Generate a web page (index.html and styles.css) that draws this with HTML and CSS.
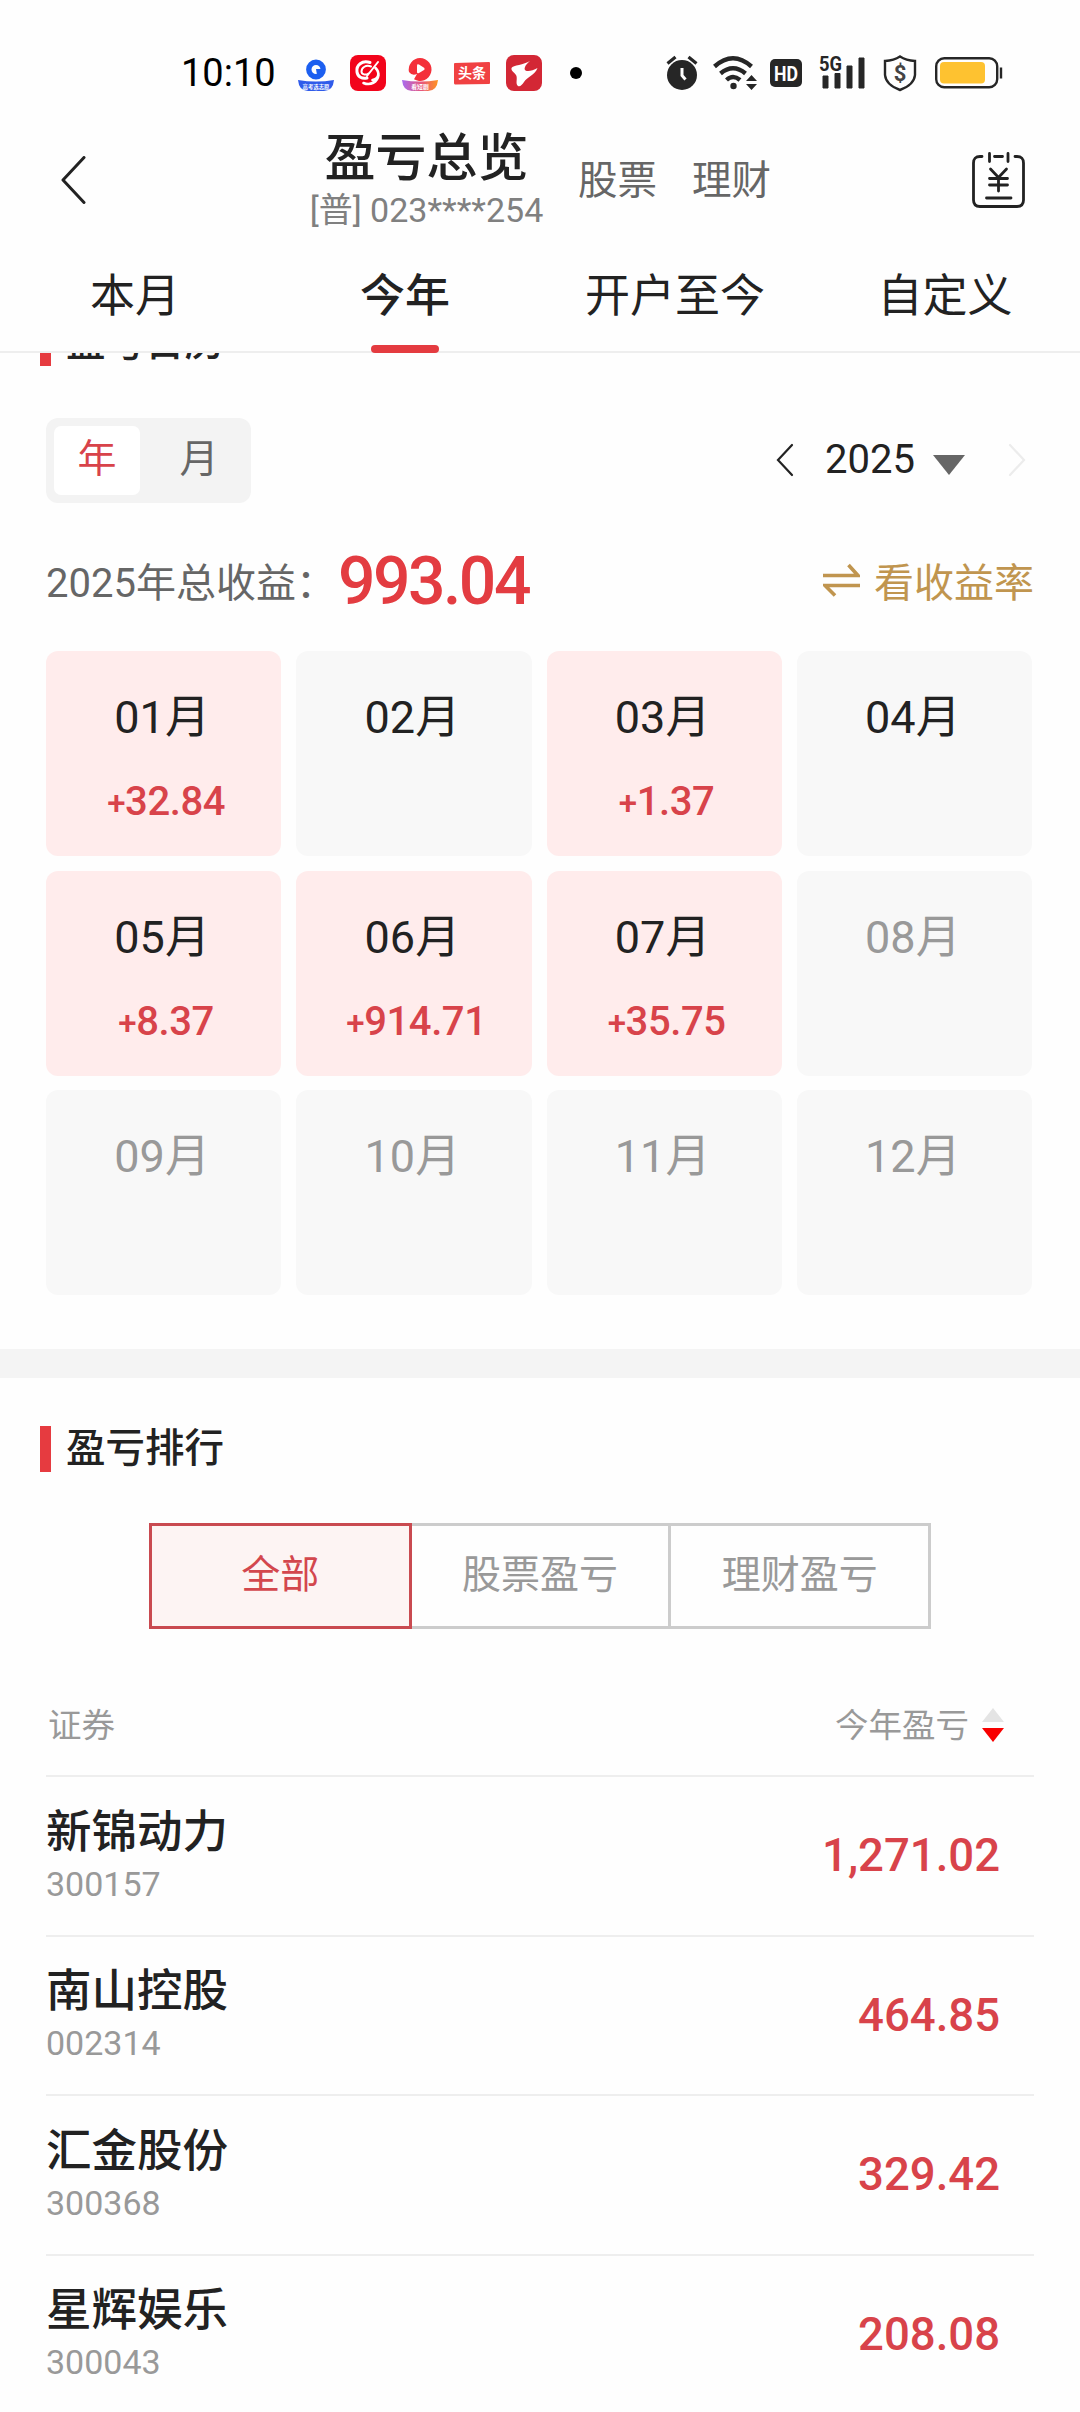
FILE: index.html
```html
<!DOCTYPE html>
<html lang="zh-CN">
<head>
<meta charset="UTF-8">
<meta name="viewport" content="width=device-width, initial-scale=1.0">
<title>盈亏总览</title>
<link rel="stylesheet" href="styles.css">
</head>
<body>
    <div class="status-bar">
        <span class="time">10:10</span>
        <div class="apps">
            <svg width="36" height="36" viewBox="0 0 36 36">
                <circle cx="18" cy="14.5" r="7.2" fill="none" stroke="#1c5ff0" stroke-width="5.4"/>
                <path d="M18 14h6v6h-5z" fill="#1c5ff0"/>
                <path d="M0 25Q18 28 36 25Q35 36 26 36H10Q1 36 0 25Z" fill="#2f5bea"/>
                <text x="18" y="33.8" font-size="5.4" font-weight="bold" text-anchor="middle" fill="#fff">高考选志愿</text>
            </svg>
            <svg width="36" height="36" viewBox="0 0 36 36">
                <rect width="36" height="36" rx="8" fill="#f2041b"/>
                <g fill="none" stroke="#fff" stroke-linecap="round">
                    <path d="M20 7.5C12 5 6 10 7 17c.7 5 5 7 10 6" stroke-width="3"/>
                    <path d="M21 11.5c-5-2-9.500 1-9.500 5c0 3 4 4 7 2" stroke-width="2"/>
                    <path d="M28 7L17 21" stroke-width="2"/>
                    <path d="M25.500 13c5 5 3 11-3 12M28.500 20c-1 7-8 11-15 8" stroke-width="2.600"/>
                </g>
            </svg>
            <svg width="36" height="36" viewBox="0 0 36 36">
                <defs>
                    <linearGradient id="ribbon"><stop offset="0" stop-color="#a86bf0"/><stop offset=".55" stop-color="#e8577b"/><stop offset="1" stop-color="#ff9420"/></linearGradient>
                </defs>
                <path d="M18 3a11.500 11.500 0 1 1-6 21.300l3-5.300a6.500 6.500 0 0 1-8-2A11.500 11.500 0 0 1 18 3Z" fill="#f4303a"/>
                <path d="M15 10.500q0-2 2-1l5 3.200q1.500 1.200 0 2.300l-5 3q-2 1-2-1z" fill="#fff"/>
                <path d="M0 25Q18 28 36 25Q35 36 26 36H10Q1 36 0 25Z" fill="url(#ribbon)"/>
                <text x="18" y="33.800" font-size="5.800" font-weight="bold" text-anchor="middle" fill="#fff">看短剧</text>
            </svg>
            <svg width="36" height="36" viewBox="0 0 36 36">
                <path d="M1 8L35 7Q36 7 36 8V28Q36 29 35 29L1 29.500Q0 29 0 28V9Q0 8 1 8Z" fill="#f04142"/>
                <text x="18" y="23.200" font-size="14" font-weight="bold" text-anchor="middle" fill="#fff">头条</text>
            </svg>
            <svg width="36" height="36" viewBox="0 0 36 36">
                <rect width="36" height="36" rx="8" fill="#d32735"/>
                <path d="M24 6C19 10 17.500 14 19.500 15.500C22 17 27 15.500 31.500 13C29 20 21 22 18 27C16 30 14 32 12 31C9 29 12 23 10 20C8 17 5 16 5.500 13C7 10 18 10 24 6Z" fill="#fff"/>
            </svg>
        </div>
        <span class="dot"></span>
        <div class="system">
            <svg class="alarm" width="32" height="36" viewBox="0 0 32 36">
                <circle cx="16" cy="20" r="15" fill="#262626"/>
                <path d="M1.500 8.500L9.500 2M22.500 2l8 6.500" stroke="#262626" stroke-width="3.200"/>
                <path d="M16 13v7.500l3.500 4" fill="none" stroke="#fff" stroke-width="3"/>
            </svg>
            <svg class="wifi" width="44" height="36" viewBox="0 0 44 36">
                <g fill="none" stroke="#262626" stroke-width="4.400">
                    <path d="M1.500 11.500Q20 -5 38.500 11.500"/>
                    <path d="M7.500 18.500Q20 8 32.500 18.500"/>
                    <path d="M13.500 25Q20 19 27 25"/>
                </g>
                <circle cx="20.500" cy="31" r="3.200" fill="#262626"/>
                <path d="M33 26l5.500-6 5.500 6zM33 29h11l-5.500 6z" fill="#262626"/>
            </svg>
            <svg class="hd" width="32" height="28" viewBox="0 0 32 28">
                <rect width="32" height="28" rx="5" fill="#262626"/>
                <text x="16" y="21.500" font-size="20.500" font-weight="bold" text-anchor="middle" textLength="24" lengthAdjust="spacingAndGlyphs" fill="#fff">HD</text>
            </svg>
            <svg class="signal" width="47" height="36" viewBox="0 0 47 36">
                <text x="0" y="16" font-size="20" font-weight="bold" textLength="23" lengthAdjust="spacingAndGlyphs" fill="#262626">5G</text>
                <path d="M4 21h5v12H4zM16 18.500h5v14.500h-5zM28 11h5v22h-5zM40 3h5v30h-5z" fill="#262626" stroke="#262626" stroke-linejoin="round"/>
            </svg>
            <svg class="shield" width="34" height="37" viewBox="0 0 34 37">
                <path d="M17 1.500Q23 5.500 32 6V20Q31 30 17 35Q3 30 2 20V6Q11 5.500 17 1.500Z" fill="none" stroke="#262626" stroke-width="2.400"/>
                <text x="17" y="26" font-size="22" font-weight="bold" text-anchor="middle" fill="#444">$</text>
            </svg>
            <svg class="battery" width="68" height="32" viewBox="0 0 68 32">
                <rect x="1.200" y="1.200" width="61" height="29" rx="8" fill="none" stroke="#262626" stroke-width="2.400"/>
                <rect x="5" y="5" width="45" height="21.500" rx="4" fill="#fec230"/>
                <path d="M66 10.500v11" stroke="#262626" stroke-width="2.400"/>
            </svg>
        </div>
    </div>

    <div class="header">
        <svg class="back" width="25" height="48" viewBox="0 0 25 48">
            <path d="M23 1.500L2 24l21 22.500" fill="none" stroke="#222" stroke-width="3" stroke-linecap="round" stroke-linejoin="round"/>
        </svg>
        <div class="title">
            <h1>盈亏总览</h1>
            <p>[普] 023****254</p>
        </div>
        <a class="link">股票</a>
        <a class="link">理财</a>
        <svg class="bill" width="53" height="56" viewBox="0 0 53 56">
            <g fill="none" stroke="#222" stroke-width="2.800" stroke-linecap="round">
                <path d="M10 4.500H8q-6.500 0-6.500 6.500V48q0 6.500 6.500 6.500H45q6.500 0 6.500-6.500V11q0-6.500-6.500-6.500H43"/>
                <path d="M22.500 4.500h8M17.500 1.500v8M36 1.500v8M18.500 17l8 8.500 8-8.500M26.500 25.500V39M17.500 26.500h18M17.500 33h18M14.500 46h24.500"/>
            </g>
        </svg>
    </div>

    <div class="tabs">
        <div class="tab">本月</div>
        <div class="tab active">今年</div>
        <div class="tab">开户至今</div>
        <div class="tab">自定义</div>
    </div>

    <div class="content">
        <div class="calendar">
            <h3 class="section-title">盈亏日历</h3>
            <div class="toolbar">
                <div class="switch">
                    <span class="on">年</span>
                    <span>月</span>
                </div>
                <div class="year-nav">
                    <svg width="18" height="34" viewBox="0 0 18 34"><path d="M16 2L2 17l14 15" fill="none" stroke="#222" stroke-width="2.200" stroke-linecap="round"/></svg>
                    <span class="year">2025</span>
                    <span class="caret"></span>
                    <svg width="18" height="34" viewBox="0 0 18 34"><path d="M2 2l14 15L2 32" fill="none" stroke="#ececec" stroke-width="2.200" stroke-linecap="round"/></svg>
                </div>
            </div>

            <div class="summary">
                <span class="label">2025年总收益：</span>
                <span class="total">993.04</span>
                <span class="rate">
                    <svg width="37" height="34" viewBox="0 0 37 34"><path d="M0 12.500H35L25.500 2M37 22.500H2L12 32.500" fill="none" stroke="#c0954f" stroke-width="3.600"/></svg>
                    看收益率
                </span>
            </div>

            <div class="months">
                <div class="month up"><b>01月</b><span><i>+</i>32.84</span></div>
                <div class="month"><b>02月</b></div>
                <div class="month up"><b>03月</b><span><i>+</i>1.37</span></div>
                <div class="month"><b>04月</b></div>
                <div class="month up"><b>05月</b><span><i>+</i>8.37</span></div>
                <div class="month up"><b>06月</b><span><i>+</i>914.71</span></div>
                <div class="month up"><b>07月</b><span><i>+</i>35.75</span></div>
                <div class="month future"><b>08月</b></div>
                <div class="month future"><b>09月</b></div>
                <div class="month future"><b>10月</b></div>
                <div class="month future"><b>11月</b></div>
                <div class="month future"><b>12月</b></div>
            </div>
        </div>

        <div class="ranking">
            <h3 class="section-title">盈亏排行</h3>
            <div class="filter">
                <div class="filter-item current">全部</div>
                <div class="filter-item">股票盈亏</div>
                <div class="filter-item">理财盈亏</div>
            </div>
            <div class="list">
                <div class="list-head">
                    <span>证券</span>
                    <span class="sort">今年盈亏
                        <svg width="22" height="34" viewBox="0 0 22 34"><path d="M0 14L11 0l11 14z" fill="#e4e4e4"/><path d="M0 20h22L11 34z" fill="#f80000"/></svg>
                    </span>
                </div>
                <div class="row">
                    <div><div class="name">新锦动力</div><div class="code">300157</div></div>
                    <div class="value">1,271.02</div>
                </div>
                <div class="row">
                    <div><div class="name">南山控股</div><div class="code">002314</div></div>
                    <div class="value">464.85</div>
                </div>
                <div class="row">
                    <div><div class="name">汇金股份</div><div class="code">300368</div></div>
                    <div class="value">329.42</div>
                </div>
                <div class="row">
                    <div><div class="name">星辉娱乐</div><div class="code">300043</div></div>
                    <div class="value">208.08</div>
                </div>
            </div>
        </div>
    </div>
</body>
</html>
```

FILE: styles.css
```css
* {
    box-sizing: border-box;
}

html {
    overflow: hidden;
}

body {
    margin: 0;
    width: 1080px;
    height: 2412px;
    overflow: hidden;
    display: flex;
    flex-direction: column;
    background-color: #fefefe;
    color: #222;
    font-family: Roboto, "Noto Sans CJK SC", sans-serif;
}

h1, h3, p {
    margin: 0;
    font-weight: 500;
}

svg {
    display: block;
    flex: none;
}

/* status bar */
.status-bar {
    height: 110px;
    flex: none;
    padding: 36px 77px 0 181px;
    display: flex;
    align-items: center;
}

.time {
    width: 117px;
    font-size: 38px;
    color: #000;
}

.apps {
    display: flex;
    gap: 16px;
}

.dot {
    width: 12px;
    height: 12px;
    margin-left: 28px;
    border-radius: 50%;
    background-color: #000;
}

.system {
    display: flex;
    align-items: center;
    margin-left: auto;
}

.wifi {
    margin-left: 15px;
}

.hd {
    margin-left: 13px;
}

.signal {
    margin-left: 17px;
}

.shield {
    margin-left: 17px;
}

.battery {
    margin-left: 18px;
}

/* header */
.header {
    height: 140px;
    flex: none;
    padding: 0 55px 0 61px;
    display: flex;
    align-items: center;
}

.title {
    width: 235px;
    margin-left: 223px;
    text-align: center;
}

.title h1 {
    font-size: 51px;
    line-height: 60px;
    white-space: nowrap;
}

.title p {
    font-size: 34px;
    line-height: 42px;
    font-weight: 400;
    color: #808080;
    white-space: nowrap;
}

.link {
    margin-left: 34px;
    padding-bottom: 7px;
    font-size: 39.500px;
    color: #666;
}

.link + .link {
    margin-left: 35px;
}

.bill {
    margin-left: auto;
}

.tabs {
    height: 103px;
    flex: none;
    display: flex;
    border-bottom: 2px solid #eee;
}

.tab {
    flex: 1;
    position: relative;
    padding-top: 14px;
    font-size: 45px;
    line-height: 66px;
    text-align: center;
}

.tab.active {
    font-weight: 500;
}

.tab.active::after {
    content: "";
    position: absolute;
    left: 101px;
    bottom: -2px;
    width: 68px;
    height: 8px;
    border-radius: 4px;
    background-color: #e43b40;
}

.content {
    flex: 1;
    overflow: hidden;
}

.section-title {
    display: flex;
    align-items: center;
    gap: 15px;
    margin-left: -6px;
    height: 46px;
    font-size: 39.500px;
    line-height: 46px;
}

.section-title::before {
    content: "";
    width: 11px;
    height: 46px;
    background-color: #e63b40;
}

/* calendar: its title is scrolled half under the tabs */
.calendar {
    height: 1029px;
    margin-top: -33px;
    padding: 0 46px;
}

.toolbar {
    display: flex;
    justify-content: space-between;
    align-items: center;
    height: 85px;
    margin-top: 52px;
}

.switch {
    display: flex;
    width: 205px;
    height: 85px;
    padding: 8px;
    gap: 16px;
    border-radius: 12px;
    background-color: #f3f3f3;
}

.switch span {
    width: 86px;
    font-size: 39px;
    line-height: 66px;
    text-align: center;
    color: #666;
}

.switch .on {
    height: 69px;
    border-radius: 7px;
    background-color: #fff;
    color: #d8434a;
}

.year-nav {
    display: flex;
    align-items: center;
    padding: 0 8px 2px 0;
}

.year {
    margin-left: 31px;
    font-size: 40px;
}

.caret {
    margin: 10px 43px 0 18px;
    border: 16px solid transparent;
    border-top: 20px solid #666;
    border-bottom: 0;
}

.summary {
    display: flex;
    align-items: center;
    height: 80px;
    margin-top: 38px;
    font-size: 40px;
}

.label {
    width: 292px;
    padding-bottom: 3px;
    color: #666;
    white-space: nowrap;
}

.total {
    font-size: 66px;
    font-weight: 500;
    letter-spacing: -2.500px;
    color: #e33c41;
}

.rate {
    display: flex;
    align-items: center;
    gap: 14px;
    margin-left: auto;
    padding-bottom: 2px;
    color: #c0954f;
}

.months {
    display: grid;
    grid-template-columns: repeat(4, 1fr);
    grid-auto-rows: 205px;
    gap: 14.500px 15px;
    width: 986px;
    margin-top: 30px;
}

.month {
    padding-top: 37px;
    border-radius: 12px;
    background-color: #f8f8f8;
    text-align: center;
}

.month b {
    display: block;
    padding-right: 3px;
    font-size: 45px;
    line-height: 60px;
    font-weight: 400;
}

.month span {
    display: block;
    margin-top: 30px;
    padding-left: 5px;
    font-size: 40px;
    line-height: 48px;
    font-weight: 500;
    letter-spacing: -0.400px;
    color: #d8434a;
}

.month i {
    font-size: 33px;
    font-style: normal;
}

.month.up {
    background-color: #ffecec;
}

.month.future {
    color: #999;
}

/* ranking */
.ranking {
    padding: 48px 46px 0;
    border-top: 29px solid #f4f4f4;
}

.filter {
    display: flex;
    width: 782px;
    height: 106px;
    margin: 51px 0 0 103px;
}

.filter-item {
    flex: 1;
    border: 3px solid #ccc;
    border-left: 0;
    font-size: 39px;
    line-height: 98px;
    text-align: center;
    color: #999;
}

.filter-item.current {
    border: 3px solid #c94a50;
    background-color: #fdf4f3;
    color: #d3474d;
}

.list-head {
    display: flex;
    justify-content: space-between;
    align-items: center;
    height: 102px;
    margin-top: 46px;
    padding: 0 30px 5px 2px;
    border-bottom: 2px solid #eee;
    font-size: 33.500px;
    color: #999;
}

.sort {
    display: flex;
    align-items: center;
    gap: 13px;
}

.sort svg {
    margin-top: 5px;
}

.row {
    display: flex;
    justify-content: space-between;
    align-items: center;
    height: 159.500px;
    padding-right: 34px;
    border-bottom: 2px solid #eee;
}

.name {
    font-size: 45.500px;
    line-height: 56px;
    font-weight: 500;
}

.code {
    font-size: 34px;
    line-height: 46px;
    color: #999;
}

.value {
    font-size: 45.500px;
    font-weight: 500;
    color: #d8434a;
}
```
